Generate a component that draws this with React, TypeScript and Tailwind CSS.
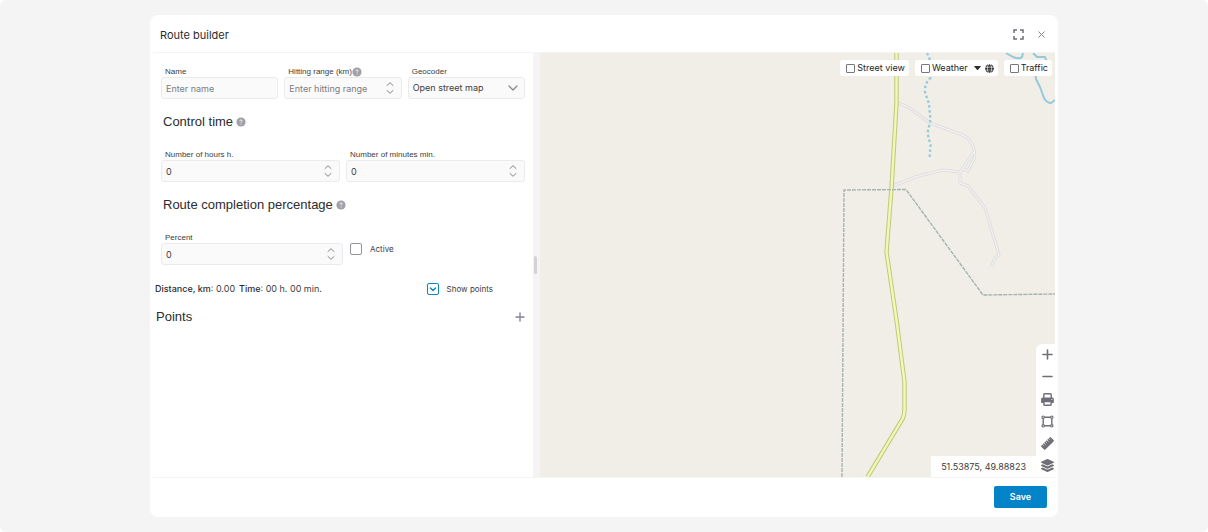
import React from "react";
import { FaGlobe, FaLayerGroup } from "react-icons/fa";

const fieldClass =
  "block h-[22px] w-full rounded-[3px] border border-[#ebebec] bg-[#fafafa] px-1 text-[9px] text-[#3c3c40] outline-none placeholder:text-[#7c7c80]";

const labelClass =
  "block whitespace-nowrap font-['Liberation_Sans',sans-serif] text-[8px] leading-[10px] text-[#3c3c40]";

const headingClass = "flex items-center gap-[3px] pl-0.5 font-['Liberation_Sans',sans-serif] text-[13px] leading-5";

const Help = () => (
  <button type="button" aria-label="Help" className="text-[#a0a0a9]">
    <svg viewBox="0 0 10 10" className="size-2.5">
      <circle cx="5" cy="5" r="4.6" fill="currentColor" />
      <path d="M3.8 4.1q.1-1.2 1.2-1.2t1.2 1q0 .6-.6.9t-.6.8" fill="none" stroke="#fff" strokeWidth=".8" />
      <circle cx="5" cy="7" r=".5" fill="#fff" />
    </svg>
  </button>
);

type NumberFieldProps = {
  id: string;
  label: string;
  value?: number;
  placeholder?: string;
  help?: boolean;
};

const NumberField = ({ id, label, value, placeholder, help }: NumberFieldProps) => (
  <div>
    <div className="flex h-2.5 items-center pl-1">
      <label htmlFor={id} className={labelClass}>
        {label}
      </label>
      {help && <Help />}
    </div>
    <div className="relative">
      <input
        id={id}
        type="number"
        defaultValue={value}
        placeholder={placeholder}
        className={`${fieldClass} [appearance:textfield] [&::-webkit-inner-spin-button]:appearance-none`}
      />
      <svg
        viewBox="0 0 8 14"
        className="pointer-events-none absolute right-2 top-1 h-3.5 w-2"
        fill="none"
        stroke="#85858a"
        strokeLinecap="round"
        strokeLinejoin="round"
      >
        <path d="M1 4.5 4 1.7l3 2.8M1 9.5l3 2.8 3-2.8" />
      </svg>
    </div>
  </div>
);

const MapCheckbox = ({ label, children }: { label: string; children?: React.ReactNode }) => (
  <div className="flex h-4 items-center rounded-[3px] bg-white pl-1.5 pr-1">
    <label className="flex items-center gap-0.5 text-[9px] leading-4 text-[#242426]">
      <input type="checkbox" className="size-[9px] appearance-none rounded-[1px] border border-[#77777b] bg-white" />
      {label}
    </label>
    {children}
  </div>
);

const trackPath =
  "M358 50l10 4 22 16 30 11q8 3 10 7 4 6 4.5 11t-.5 7l-6 12-5-2M434 99l-14 20M353 133l22-9 28-7 17 2v11l8 3 17 22 14 47-4 3-3.5 9";
const roadPath = "M356.5 0v50l-5 85-5 64 10 68 8 62v28q0 5-2 9l-35 58";

// roads, rivers and borders around the current position
const MapCanvas = () => (
  <svg
    viewBox="0 0 515 424"
    preserveAspectRatio="xMaxYMid slice"
    className="absolute inset-0 h-full w-full"
    fill="none"
    strokeLinejoin="round"
  >
    <path d={trackPath} stroke="#dcdcde" strokeWidth="3" />
    <path d={trackPath} stroke="#f1f0ee" strokeWidth="1.4" />
    <path
      d="M387 0l3 7q2 8 .5 18-6 5-5.5 14l4 12 1.5 16-3 13 3 12-1 14"
      stroke="#97cbdb"
      strokeWidth="2.4"
      strokeDasharray="2.6 2.4"
    />
    <path
      d="M466 0q6 4 10 5t6-1l1-4M493 0l4 4h8l2 5M495 20l1 6 4 8 4 11q3 5 7 5l4-3"
      stroke="#94c9da"
      strokeWidth="2"
    />
    <path d={roadPath} stroke="#c0c97c" strokeWidth="4.4" />
    <path d={roadPath} stroke="#f1f7b4" strokeWidth="2.4" />
    <path
      d="M302 424l2-287 62-.5 77 105.5 72-1"
      stroke="#a5b4ac"
      strokeWidth="1.4"
      strokeDasharray="4 1"
    />
  </svg>
);

const toolButton = "flex h-[22px] w-full items-center justify-center pl-1";

const MapTools = () => (
  <div className="flex w-[19px] flex-col rounded-tl-md bg-white pb-px text-[#6f6f78]">
    <button type="button" aria-label="Zoom in" className={toolButton}>
      <svg viewBox="0 0 12 12" className="size-3 shrink-0" stroke="currentColor" strokeWidth="1.6" strokeLinecap="round">
        <path d="M5.5 1v9M1 5.5h9" />
      </svg>
    </button>
    <button type="button" aria-label="Zoom out" className={toolButton}>
      <svg viewBox="0 0 12 12" className="size-3 shrink-0" stroke="currentColor" strokeWidth="1.6" strokeLinecap="round">
        <path d="M1 5.5h9" />
      </svg>
    </button>
    <button type="button" aria-label="Print" className={toolButton}>
      <svg viewBox="0 0 13 13" className="size-[13px] shrink-0" fill="none" stroke="currentColor" strokeWidth="1.4" strokeLinejoin="round">
        <path d="M2.8 5V1.8q0-1 1-1h5.4q1 0 1 1V5" />
        <path d="M1.7 4.5h9.6q1.6 0 1.6 1.6v3.1q0 .7-.7.7H.8q-.7 0-.7-.7V6.1Q.1 4.5 1.7 4.5z" fill="currentColor" stroke="none" />
        <path d="M2.9 8.5h7.2v2.9q0 .9-.9.9H3.8q-.9 0-.9-.9z" fill="#fff" />
        <circle cx="10.9" cy="6.5" r=".6" fill="#fff" stroke="none" />
      </svg>
    </button>
    <button type="button" aria-label="Select area" className={toolButton}>
      <svg viewBox="0 0 13 13" className="size-[13px] shrink-0" fill="none" stroke="currentColor" strokeWidth="1.4">
        <path d="M3 2.2h7M3 10.8h7M2.2 3v7M10.8 3v7" />
        <g fill="#fff" strokeWidth="1.2">
          <circle cx="2.2" cy="2.2" r="1.2" />
          <circle cx="10.8" cy="2.2" r="1.2" />
          <circle cx="2.2" cy="10.8" r="1.2" />
          <circle cx="10.8" cy="10.8" r="1.2" />
        </g>
      </svg>
    </button>
    <button type="button" aria-label="Measure" className={toolButton}>
      <svg viewBox="0 0 13 13" className="size-[13px] shrink-0">
        <g transform="rotate(-45 6.5 6.5)">
          <rect x="-.2" y="3.7" width="13.4" height="5.6" rx=".9" fill="currentColor" />
          <path d="M2.3 3.5v2M4.4 3.5v2.4M6.5 3.5v2M8.6 3.5v2.4M10.7 3.5v2" stroke="#fff" strokeWidth=".7" />
        </g>
      </svg>
    </button>
    <button type="button" aria-label="Layers" className={toolButton}>
      <FaLayerGroup size={13} className="shrink-0" />
    </button>
  </div>
);

const RouteForm = () => (
  <form className="px-2 pt-3.5">
    <div className="grid grid-cols-3 gap-1.5">
      <div>
        <label htmlFor="name" className={`${labelClass} pl-1`}>
          Name
        </label>
        <input id="name" type="text" placeholder="Enter name" className={fieldClass} />
      </div>
      <NumberField id="range" label="Hitting range (km)" placeholder="Enter hitting range" help />
      <div>
        <label htmlFor="geocoder" className={`${labelClass} pl-1`}>
          Geocoder
        </label>
        <div className="relative">
          <select id="geocoder" className={`${fieldClass} appearance-none`}>
            <option>Open street map</option>
          </select>
          <svg
            viewBox="0 0 10 6"
            className="pointer-events-none absolute right-[7px] top-2 h-1.5 w-2.5"
            fill="none"
            stroke="#85858a"
            strokeWidth="1.2"
            strokeLinecap="round"
            strokeLinejoin="round"
          >
            <path d="M1 1l4 4 4-4" />
          </svg>
        </div>
      </div>
    </div>

    <h2 className={`${headingClass} mt-[13px]`}>
      Control time
      <Help />
    </h2>
    <div className="mt-[18px] grid grid-cols-2 gap-1.5">
      <NumberField id="hours" label="Number of hours h." value={0} />
      <NumberField id="minutes" label="Number of minutes min." value={0} />
    </div>

    <h2 className={`${headingClass} mt-[13px]`}>
      Route completion percentage
      <Help />
    </h2>
    <div className="mt-[18px] grid grid-cols-2">
      <NumberField id="percent" label="Percent" value={0} />
      <label className="flex items-center gap-2 self-center pl-[7px] text-[8px] leading-3 text-[#3c3c40]">
        <input type="checkbox" className="size-3 appearance-none rounded-[2px] border border-[#95959f] bg-white" />
        Active
      </label>
    </div>

    <div className="-ml-1.5 mt-4 flex items-center pr-8 text-[9px] leading-4 text-[#3c3c40]">
      <p>
        <span className="font-medium text-[#2c2c2e]">Distance, km</span>: 0.00
      </p>
      <p className="ml-1">
        <span className="font-medium text-[#2c2c2e]">Time</span>: 00 h. 00 min.
      </p>
      <label className="ml-auto flex items-center gap-2 text-[8px]">
        <span className="relative flex">
          <input
            type="checkbox"
            defaultChecked
            className="peer size-3 appearance-none rounded-[2px] border border-[#0a84c6] bg-white"
          />
          <svg
            viewBox="0 0 12 12"
            className="pointer-events-none absolute inset-0 hidden size-3 peer-checked:block"
            fill="none"
            stroke="#0a84c6"
            strokeWidth="1.4"
            strokeLinecap="round"
            strokeLinejoin="round"
          >
            <path d="M3.5 5l2.5 2.5L8.5 5" />
          </svg>
        </span>
        Show points
      </label>
    </div>

    <div className="-ml-[7px] mt-2.5 flex items-center justify-between">
      <h2 className={headingClass}>Points</h2>
      <button type="button" aria-label="Add point" className="text-[#85858e]">
        <svg viewBox="0 0 10 10" className="size-2.5" stroke="currentColor" strokeWidth="1.4" strokeLinecap="round">
          <path d="M5 1v8M1 5h8" />
        </svg>
      </button>
    </div>
  </form>
);

const App = () => {
  return (
    <div className="bg-white">
      <div className="flex min-h-screen flex-col rounded-md bg-[#f4f4f4] py-[15px] font-['Inter',sans-serif] text-[#2c2c2e]">
        <div
          role="dialog"
          aria-labelledby="dialog-title"
          className="mx-auto flex w-full max-w-[908px] flex-1 flex-col rounded-lg bg-white px-[3px]"
        >
          {/* Header */}
          <header className="flex h-[38px] items-center justify-between border-b border-[#f4f4f5] pl-[7px] pr-[9px] pt-0.5">
            <h1 id="dialog-title" className="text-[11px] leading-4">
              Route builder
            </h1>
            <div className="flex items-center gap-[13px] text-[#6f6f78]">
              <button type="button" aria-label="Full screen">
                <svg viewBox="0 0 11 11" className="size-[11px]" fill="none" stroke="currentColor" strokeWidth="1.5">
                  <path d="M1 4V1h3M7 1h3v3M10 7v3H7M4 10H1V7" />
                </svg>
              </button>
              <button type="button" aria-label="Close">
                <svg viewBox="0 0 9 9" className="size-[9px]" stroke="#85858a" strokeLinecap="round">
                  <path d="M1.8 1.8l5.4 5.4M7.2 1.8l-5.4 5.4" />
                </svg>
              </button>
            </div>
          </header>

          {/* Form and map */}
          <main className="grid flex-1 grid-cols-[380fr_7px_515fr]">
            <RouteForm />

            <div role="separator" className="flex items-center bg-[#f4f4f5] pl-px">
              <div className="h-[18px] w-[3px] rounded-sm bg-[#d1d1d6]" />
            </div>

            <section aria-label="Map" className="relative overflow-hidden bg-[#f1eee8]">
              <MapCanvas />
              <div className="absolute right-[3px] top-[7px] flex gap-1.5">
                <MapCheckbox label="Street view" />
                <MapCheckbox label="Weather">
                  <svg viewBox="0 0 7 4" className="ml-1.5 h-1 w-[7px]" fill="currentColor">
                    <path d="M.7 0h5.6q.8 0 .3.7L4 3.7q-.5.4-1 0L.4.7Q-.1 0 .7 0z" />
                  </svg>
                  <button type="button" aria-label="Weather layers" className="ml-1">
                    <FaGlobe size={9} />
                  </button>
                </MapCheckbox>
                <MapCheckbox label="Traffic" />
              </div>
              <div className="absolute bottom-0 right-0 flex items-end">
                <p className="bg-white px-2.5 text-[9px] leading-[21px] text-[#3c3c40]">51.53875, 49.88823</p>
                <MapTools />
              </div>
            </section>
          </main>

          {/* Footer */}
          <footer className="flex h-10 items-center justify-end border-t border-[#f4f4f5] pb-0.5 pr-2">
            <button
              type="submit"
              className="h-[22px] w-[53px] rounded-[2px] bg-[#0484c8] text-[9px] font-semibold text-white"
            >
              Save
            </button>
          </footer>
        </div>
      </div>
    </div>
  );
};

export default App;
